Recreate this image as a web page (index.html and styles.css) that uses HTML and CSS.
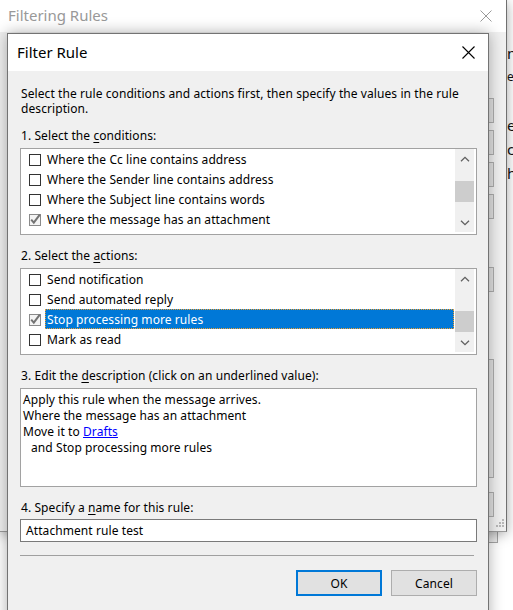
FILE: index.html
```html
<!DOCTYPE html>
<html>
<head>
<meta charset="utf-8">
<title>Filter Rule</title>
<link rel="stylesheet" href="styles.css">
</head>
<body>
<div class="desktop">
  <div class="backwin">
    <div class="backtext">
      <div>n</div>
      <div class="small">es</div>
      <div>&nbsp;</div>
      <div>e</div>
      <div>c</div>
      <div>h</div>
    </div>
  </div>
  <div class="stubwin"></div>
  <div class="bgwin">
    <div class="bg-title">
      <span class="bg-title-text">Filtering Rules</span>
      <svg class="bg-close" width="12" height="12" viewBox="0 0 12 12"><path d="M0.5 0.5 L11.5 11.5 M11.5 0.5 L0.5 11.5" stroke="#9a9a9a" stroke-width="1" fill="none"/></svg>
    </div>
    <div class="bg-body">
      <div class="bg-btns">
        <div class="bg-btn first"></div>
        <div class="bg-btn"></div>
        <div class="bg-btn"></div>
        <div class="bg-btn"></div>
        <div class="bg-btn gap1"></div>
        <div class="bg-btn tall"></div>
        <div class="bg-btn gap2"></div>
      </div>
      <svg class="grip" width="12" height="12" viewBox="0 0 12 12">
        <rect x="9" y="1" width="2" height="2" fill="#b8b8b8"/>
        <rect x="6" y="4" width="2" height="2" fill="#b8b8b8"/>
        <rect x="9" y="4" width="2" height="2" fill="#b8b8b8"/>
        <rect x="3" y="7" width="2" height="2" fill="#b8b8b8"/>
        <rect x="6" y="7" width="2" height="2" fill="#b8b8b8"/>
        <rect x="9" y="7" width="2" height="2" fill="#b8b8b8"/>
      </svg>
    </div>
  </div>

  <div class="dialog">
    <div class="dlg-title">
      <span class="dlg-title-text">Filter Rule</span>
      <svg class="dlg-close" width="13" height="13" viewBox="0 0 13 13"><path d="M0.5 0.5 L12.5 12.5 M12.5 0.5 L0.5 12.5" stroke="#000" stroke-width="1.1" fill="none"/></svg>
    </div>
    <div class="dlg-body">
      <p class="intro">Select the rule conditions and actions first, then specify the values in the rule description.</p>

      <div class="label first-label">1. Select the <u>c</u>onditions:</div>
      <div class="listbox">
        <div class="items">
          <div class="row"><span class="cb"></span><span class="txt">Where the Cc line contains address</span></div>
          <div class="row"><span class="cb"></span><span class="txt">Where the Sender line contains address</span></div>
          <div class="row"><span class="cb"></span><span class="txt">Where the Subject line contains words</span></div>
          <div class="row"><span class="cb checked"><svg width="12" height="12" viewBox="0 0 12 12"><path d="M2.2 5.6 L4.8 8.6 L10.8 0.6" stroke="#737373" stroke-width="2" fill="none"/></svg></span><span class="txt">Where the message has an attachment</span></div>
        </div>
        <div class="sb">
          <div class="sb-btn"><svg width="10" height="6" viewBox="0 0 10 6"><polyline points="1,5.3 5,1.3 9,5.3" stroke="#606060" stroke-width="1.3" fill="none"/></svg></div>
          <div class="sb-track"><div class="sb-thumb thumb1"></div></div>
          <div class="sb-btn"><svg width="10" height="6" viewBox="0 0 10 6"><polyline points="1,0.7 5,4.7 9,0.7" stroke="#606060" stroke-width="1.3" fill="none"/></svg></div>
        </div>
      </div>

      <div class="label">2. Select the <u>a</u>ctions:</div>
      <div class="listbox">
        <div class="items">
          <div class="row"><span class="cb"></span><span class="txt">Send notification</span></div>
          <div class="row"><span class="cb"></span><span class="txt">Send automated reply</span></div>
          <div class="row"><span class="cb checked"><svg width="12" height="12" viewBox="0 0 12 12"><path d="M2.2 5.6 L4.8 8.6 L10.8 0.6" stroke="#737373" stroke-width="2" fill="none"/></svg></span><span class="txt selected">Stop processing more rules</span></div>
          <div class="row"><span class="cb"></span><span class="txt">Mark as read</span></div>
        </div>
        <div class="sb">
          <div class="sb-btn"><svg width="10" height="6" viewBox="0 0 10 6"><polyline points="1,5.3 5,1.3 9,5.3" stroke="#606060" stroke-width="1.3" fill="none"/></svg></div>
          <div class="sb-track"><div class="sb-thumb thumb2"></div></div>
          <div class="sb-btn"><svg width="10" height="6" viewBox="0 0 10 6"><polyline points="1,0.7 5,4.7 9,0.7" stroke="#606060" stroke-width="1.3" fill="none"/></svg></div>
        </div>
      </div>

      <div class="label">3. Edit the <u>d</u>escription (click on an underlined value):</div>
      <div class="desc">
        <div>Apply this rule when the message arrives.</div>
        <div>Where the message has an attachment</div>
        <div>Move it to <a class="link">Drafts</a></div>
        <div class="indent">and Stop processing more rules</div>
      </div>

      <div class="label">4. Specify a <u>n</u>ame for this rule:</div>
      <div class="namebox">Attachment rule test</div>

      <div class="sep"></div>

      <div class="buttons">
        <div class="btn default">OK</div>
        <div class="btn">Cancel</div>
      </div>
    </div>
  </div>
</div>
</body>
</html>
```

FILE: styles.css
```css
* { box-sizing: border-box; }
html, body { margin: 0; padding: 0; }
body {
  width: 513px;
  height: 610px;
  overflow: hidden;
  font-family: "Noto Sans", "Open Sans", sans-serif;
  font-size: 12px;
  color: #000;
  background: #fff;
}
.desktop {
  position: relative;
  width: 513px;
  height: 610px;
  overflow: hidden;
  background: #f3f3f3;
}

/* far-back window */
.backwin {
  position: absolute;
  left: 0;
  top: 0;
  width: 513px;
  height: 610px;
  background: #fff;
}
.backtext {
  padding: 41px 0 0 507px;
  font-size: 15px;
  line-height: 24px;
  white-space: nowrap;
  color: #111;
}
.backtext .small { font-size: 12px; }

.stubwin {
  position: absolute;
  left: 480px;
  top: 510px;
  width: 18px;
  height: 33px;
  background: #f0f0f0;
  border: 1px solid #a8a8a8;
}

/* background "Filtering Rules" window */
.bgwin {
  position: absolute;
  left: 0;
  top: 0;
  width: 507px;
  height: 532px;
  background: #f0f0f0;
  border-right: 1px solid #707070;
  border-bottom: 1px solid #9a9a9a;
  box-shadow: 0 2px 12px rgba(0,0,0,0.35);
  display: flex;
  flex-direction: column;
}
.bg-title {
  height: 32px;
  flex: none;
  background: #fff;
  display: flex;
  align-items: center;
  justify-content: space-between;
  padding: 0 14px 3px 8px;
}
.bg-title-text {
  font-size: 15px;
  color: #999;
  line-height: 20px;
}
.bg-close { margin-top: 2px; }
.bg-body {
  flex: 1;
  display: flex;
  flex-direction: column;
  align-items: flex-end;
  padding: 0 12px 0 0;
}
.bg-btns {
  display: flex;
  flex-direction: column;
  align-items: flex-end;
  padding-top: 66px;
}
.bg-btn {
  width: 80px;
  height: 25px;
  margin-bottom: 7px;
  background: #e1e1e1;
  border: 1px solid #adadad;
}
.bg-btn.gap1 { margin-top: 41px; }
.bg-btn.tall { margin-top: 60px; height: 119px; }
.bg-btn.gap2 { margin-top: 7px; }
.grip { margin-right: -11px; margin-top: -6px; }

/* Filter Rule dialog */
.dialog {
  position: absolute;
  left: 7px;
  top: 33px;
  width: 482px;
  height: 600px;
  background: #f0f0f0;
  border: 1px solid #737373;
  box-shadow: 0 0 14px rgba(0,0,0,0.32);
}
.dlg-title {
  height: 37px;
  background: #fff;
  display: flex;
  align-items: center;
  justify-content: space-between;
  padding: 0 13px 1px 9px;
}
.dlg-title-text {
  font-size: 15px;
  line-height: 20px;
}
.dlg-body {
  padding: 15px 11px 0 12px;
  letter-spacing: 0.08px;
}
.intro {
  margin: 0;
  padding-left: 1px;
  line-height: 15px;
}
.label {
  margin-top: 13px;
  line-height: 15px;
  padding-left: 1px;
}
.label.first-label { margin-top: 12px; }
.label u { text-underline-offset: 2px; }

.listbox {
  margin-top: 5px;
  height: 87px;
  background: #fff;
  border: 1px solid #a2a2a2;
  display: flex;
}
.items {
  flex: 1;
  display: flex;
  flex-direction: column;
}
.row {
  height: 20px;
  display: flex;
  align-items: center;
}
.cb {
  width: 12px;
  height: 12px;
  margin: 2px 4px 0 8px;
  border: 1px solid #333;
  background: #fff;
  flex: none;
  position: relative;
}
.cb.checked {
  border-color: #8a8a8a;
  background: #f4f4f4;
}
.cb svg {
  position: absolute;
  left: -1px;
  top: -1px;
  overflow: visible;
}
.txt {
  flex: 1;
  height: 20px;
  line-height: 21px;
  padding-left: 2px;
  margin-right: 1px;
  white-space: nowrap;
}
.txt.selected {
  background: #0078d7;
  color: #fff;
  outline: 1px dotted #f0a030;
  outline-offset: -1px;
}
.sb {
  width: 19px;
  margin: 0 2px 2px 0;
  background: #f0f0f0;
  display: flex;
  flex-direction: column;
}
.sb-btn {
  height: 19px;
  display: flex;
  align-items: center;
  justify-content: center;
}
.sb-track {
  flex: 1;
}
.sb-thumb {
  height: 21px;
  background: #cdcdcd;
}
.thumb1 { margin-top: 13px; }
.thumb2 { margin-top: 23px; }

.desc {
  margin-top: 5px;
  height: 99px;
  background: #fff;
  border: 1px solid #a2a2a2;
  padding: 3px 2px 0 2px;
  line-height: 16px;
}
.desc .indent { padding-left: 8px; }
.link {
  color: #0000ff;
  text-decoration: underline;
}

.namebox {
  margin-top: 4px;
  height: 23px;
  background: #fff;
  border: 1px solid #7a7a7a;
  padding-left: 5px;
  line-height: 21px;
}

.sep {
  margin: 13px 3px 0 0;
  height: 1px;
  background: #a0a0a0;
}

.buttons {
  margin-top: 14px;
  display: flex;
  justify-content: flex-end;
  gap: 9px;
}
.btn {
  width: 86px;
  height: 26px;
  background: #e1e1e1;
  border: 1px solid #adadad;
  display: flex;
  align-items: center;
  justify-content: center;
}
.btn.default {
  border: 2px solid #0078d7;
}
```
